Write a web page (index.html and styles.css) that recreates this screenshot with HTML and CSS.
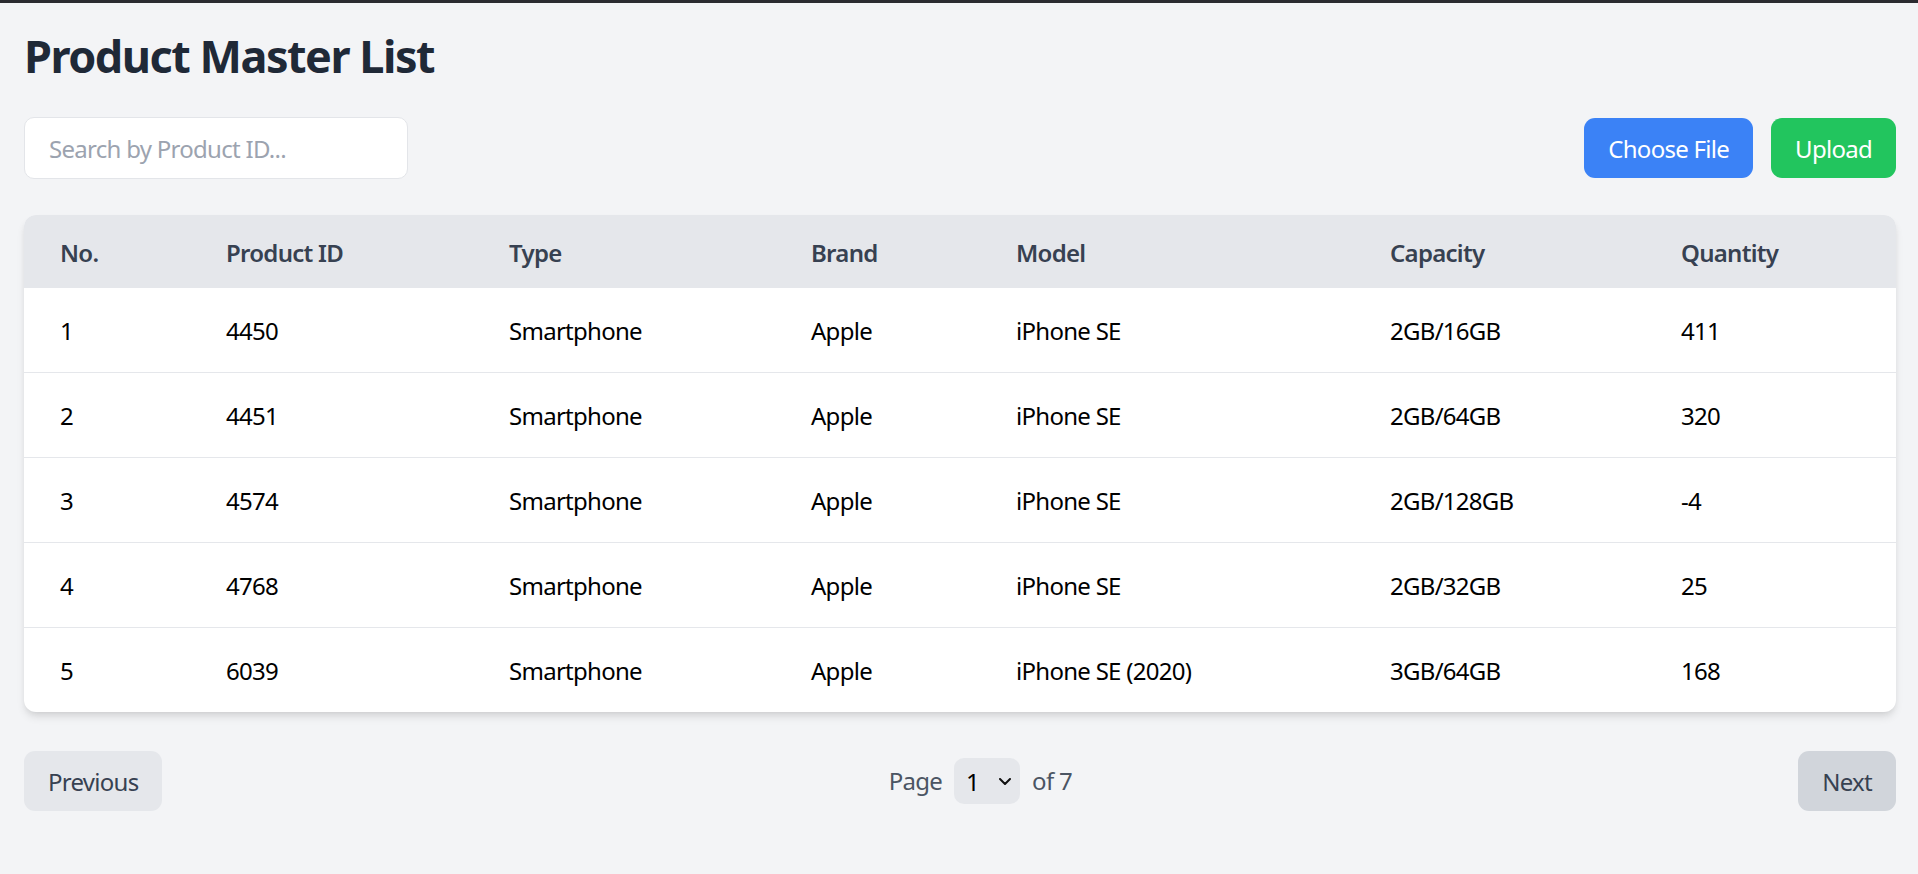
FILE: index.html
```html
<!DOCTYPE html>
<html lang="en">
<head>
<meta charset="utf-8">
<title>Product Master List</title>
<link rel="stylesheet" href="styles.css">
</head>
<body>
<div class="topbar"></div>
<main class="page">
  <h1 class="title">Product Master List</h1>
  <div class="toolbar">
    <input class="search" type="text" placeholder="Search by Product ID...">
    <div class="actions">
      <button class="btn btn-blue">Choose File</button>
      <button class="btn btn-green">Upload</button>
    </div>
  </div>
  <div class="card">
    <table class="grid">
      <colgroup>
        <col class="c1"><col class="c2"><col class="c3"><col class="c4"><col class="c5"><col class="c6"><col class="c7">
      </colgroup>
      <thead>
        <tr><th>No.</th><th>Product ID</th><th>Type</th><th>Brand</th><th>Model</th><th>Capacity</th><th>Quantity</th></tr>
      </thead>
      <tbody>
        <tr><td>1</td><td>4450</td><td>Smartphone</td><td>Apple</td><td>iPhone SE</td><td>2GB/16GB</td><td>411</td></tr>
        <tr><td>2</td><td>4451</td><td>Smartphone</td><td>Apple</td><td>iPhone SE</td><td>2GB/64GB</td><td>320</td></tr>
        <tr><td>3</td><td>4574</td><td>Smartphone</td><td>Apple</td><td>iPhone SE</td><td>2GB/128GB</td><td>-4</td></tr>
        <tr><td>4</td><td>4768</td><td>Smartphone</td><td>Apple</td><td>iPhone SE</td><td>2GB/32GB</td><td>25</td></tr>
        <tr><td>5</td><td>6039</td><td>Smartphone</td><td>Apple</td><td>iPhone SE (2020)</td><td>3GB/64GB</td><td>168</td></tr>
      </tbody>
    </table>
  </div>
  <div class="pager">
    <button class="btn btn-prev">Previous</button>
    <div class="pageinfo">
      <span>Page</span>
      <span class="select-wrap">
        <select class="page-select">
          <option>1</option><option>2</option><option>3</option><option>4</option><option>5</option><option>6</option><option>7</option>
        </select>
        <svg class="chev" width="12" height="7" viewBox="0 0 12 7"><path d="M1 1l5 5 5-5" fill="none" stroke="#111" stroke-width="2" stroke-linecap="round" stroke-linejoin="round"/></svg>
      </span>
      <span>of 7</span>
    </div>
    <button class="btn btn-next">Next</button>
  </div>
</main>
</body>
</html>
```
FILE: styles.css
```css
* { box-sizing: border-box; }
html, body { margin: 0; padding: 0; }
body {
  background: #f3f4f6;
  font-family: "Segoe UI", "Noto Sans", "Open Sans", sans-serif;
  font-size: 24px;
  line-height: 36px;
  color: #000;
  letter-spacing: -0.03em;
}
.topbar { height: 3px; background: #2b2b30; }
.page { padding: 24px 22px 24px 24px; }
.title {
  margin: 2px 0 34px 0;
  font-size: 45px;
  line-height: 54px;
  font-weight: 700;
  color: #1f2937;
  letter-spacing: -0.033em;
}
.toolbar {
  display: flex;
  justify-content: space-between;
  align-items: center;
}
.search {
  width: 384px;
  height: 62px;
  padding: 0 24px;
  border: 1px solid #e3e5e9;
  border-radius: 10px;
  background: #fff;
  font: inherit;
  letter-spacing: inherit;
  color: #111827;
  outline: none;
}
.search::placeholder { color: #9ca3af; }
.actions { display: flex; gap: 18px; }
.btn {
  font: inherit;
  letter-spacing: inherit;
  border: 0;
  border-radius: 11px;
  padding: 13px 24px 11px 24px;
  line-height: 36px;
  cursor: pointer;
}
.btn-blue { background: #3b82f6; color: #fff; }
.btn-green { background: #22c55e; color: #fff; }
.card {
  margin-top: 36px;
  background: #fff;
  border-radius: 12px;
  overflow: hidden;
  box-shadow: 0 6px 9px -1px rgba(0,0,0,0.1), 0 3px 6px -3px rgba(0,0,0,0.1);
}
.grid {
  width: 100%;
  border-collapse: collapse;
  table-layout: fixed;
}
.c1 { width: 166px; }
.c2 { width: 283px; }
.c3 { width: 302px; }
.c4 { width: 205px; }
.c5 { width: 374px; }
.c6 { width: 291px; }
.c7 { width: 251px; }
.grid thead tr { background: #e5e7eb; }
.grid th {
  text-align: left;
  font-weight: 600;
  color: #374151;
  padding: 20px 36px 17px 36px;
  white-space: nowrap;
}
.grid td {
  padding: 25px 36px 23px 36px;
  white-space: nowrap;
}
.grid tbody tr + tr td { border-top: 1px solid #e5e7eb; }
.pager {
  margin-top: 39px;
  display: flex;
  justify-content: space-between;
  align-items: center;
}
.btn-prev { background: #e5e7eb; color: #374151; }
.btn-next { background: #d1d5db; color: #374151; }
.pageinfo {
  display: flex;
  align-items: center;
  gap: 12px;
  color: #4b5563;
}
.select-wrap { position: relative; display: inline-block; }
.page-select {
  appearance: none;
  -webkit-appearance: none;
  width: 66px;
  height: 46px;
  padding: 1px 0 0 12px;
  border: 0;
  border-radius: 10px;
  background: #e5e7eb;
  font: inherit;
  color: #000;
  outline: none;
}
.chev {
  position: absolute;
  left: 45px;
  top: 20px;
  pointer-events: none;
}
```
